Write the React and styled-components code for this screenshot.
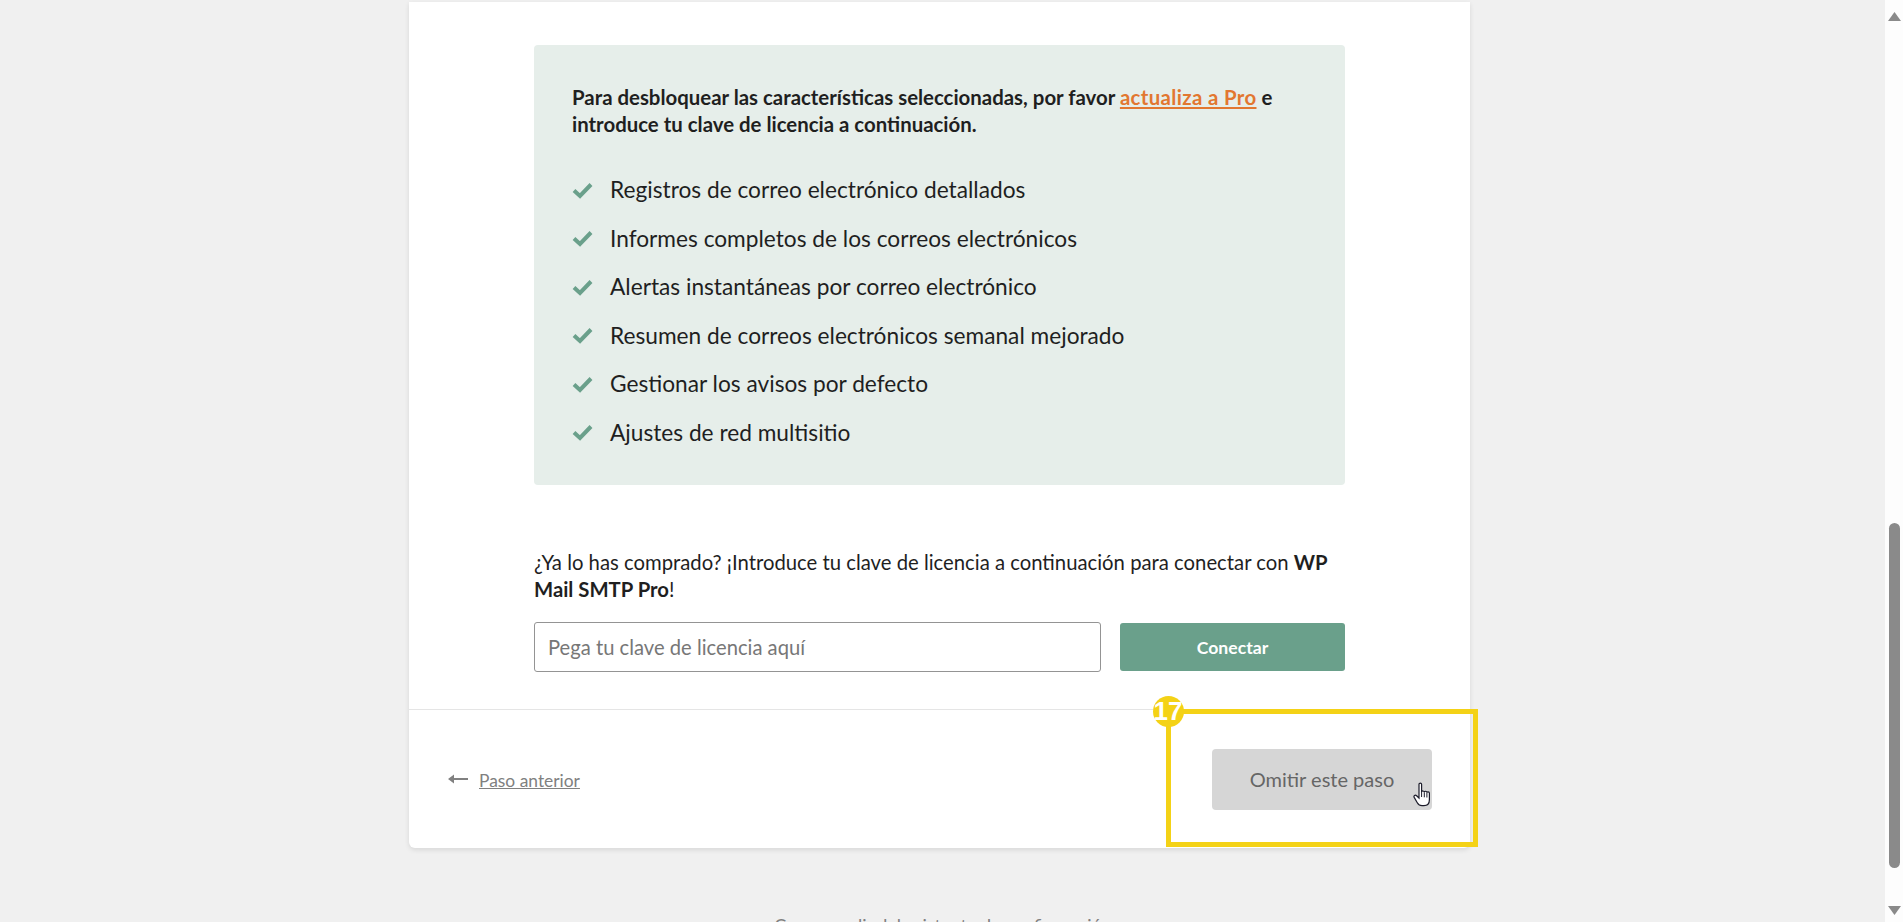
import React from 'react';
import styled, { createGlobalStyle } from 'styled-components';

const features = [
    'Registros de correo electrónico detallados',
    'Informes completos de los correos electrónicos',
    'Alertas instantáneas por correo electrónico',
    'Resumen de correos electrónicos semanal mejorado',
    'Gestionar los avisos por defecto',
    'Ajustes de red multisitio',
];

const GlobalStyle = createGlobalStyle`
    html, body {
        margin: 0;
        height: 100%;
        overflow: hidden;
        background: #f0f0f0;
    }

    * {
        box-sizing: border-box;
    }
`;

const Window = styled.div`
    display: flex;
    width: 1903px;
    height: 922px;
    overflow: hidden;
    background: #f0f0f0;
    font-family: Lato, "Open Sans", sans-serif;
    color: #1f1f1f;
`;

const Main = styled.main`
    flex: 1;
    min-width: 0;
    padding: 2px 6px 0 0;
    display: flex;
    flex-direction: column;
    align-items: center;
`;

const Card = styled.section`
    position: relative;
    width: 1061px;
    background: #fff;
    border-radius: 0 0 6px 6px;
    box-shadow: 0 2px 5px rgba(0, 0, 0, 0.1);
`;

const Body = styled.div`
    padding: 43px 125px 37px;
`;

const UpgradePanel = styled.div`
    background: #e6eeea;
    border-radius: 4px;
    padding: 39px 38px 34px;
    height: 440px;
`;

const Lead = styled.p`
    margin: 0 0 37px;
    font-size: 20.4px;
    line-height: 27px;
    font-weight: 700;
`;

const UpgradeLink = styled.a`
    color: #e27730;
    letter-spacing: 0.35px;
    text-decoration: underline;
`;

const FeatureList = styled.ul`
    list-style: none;
    margin: 0;
    padding: 0;
    display: flex;
    flex-direction: column;
    gap: 18.6px;
`;

const Feature = styled.li`
    display: flex;
    align-items: center;
    gap: 17px;
    font-size: 22.7px;
    line-height: 30px;
`;

const CheckIcon = styled.svg`
    width: 21px;
    height: 17px;
    flex: none;
    fill: none;
    stroke: #6aa08b;
    stroke-width: 4;
`;

const Purchased = styled.p`
    margin: 64px 0 19px;
    font-size: 20.3px;
    line-height: 27px;
`;

const LicenseRow = styled.div`
    display: flex;
    gap: 19px;
`;

const LicenseInput = styled.input`
    width: 567px;
    height: 50px;
    padding: 0 13px;
    border: 1px solid #949494;
    border-radius: 3px;
    background: #fff;
    font: 400 20.2px Lato, "Open Sans", sans-serif;

    &::placeholder {
        color: #777;
        opacity: 1;
    }
`;

const ConnectButton = styled.button`
    flex: 1;
    height: 48px;
    margin-top: 1px;
    border: none;
    border-radius: 3px;
    background: #6aa08b;
    color: #fff;
    font: 700 17.6px Lato, "Open Sans", sans-serif;
`;

const Footer = styled.footer`
    display: flex;
    align-items: center;
    justify-content: space-between;
    height: 139px;
    padding: 0 38px 0 39px;
    border-top: 1px solid #e5e5e5;
`;

const BackLink = styled.a`
    display: flex;
    align-items: center;
    gap: 11px;
    color: #808080;
    font-size: 17.4px;
`;

const BackLabel = styled.span`
    margin-top: 2px;
    text-decoration: underline;
`;

const BackArrow = styled.svg`
    width: 20px;
    height: 12px;
    fill: #808080;
`;

const SkipButton = styled.button`
    position: relative;
    width: 220px;
    height: 61px;
    border: none;
    border-radius: 4px;
    background: #d6d6d6;
    color: #666;
    font: 400 20px Lato, "Open Sans", sans-serif;
`;

const HandCursor = styled.svg`
    position: absolute;
    left: 201px;
    top: 33px;
    width: 18px;
    height: 25px;
`;

const Highlight = styled.div`
    position: absolute;
    left: 757px;
    top: 707px;
    width: 312px;
    height: 138px;
    border: 5px solid #f4d216;
    pointer-events: none;
`;

const StepBadge = styled.span`
    position: absolute;
    left: -18.5px;
    top: -18.5px;
    width: 31px;
    height: 31px;
    border-radius: 50%;
    background: #f4d216;
    color: #fff;
    font: 700 26px/31px "Liberation Sans", sans-serif;
    text-align: center;
`;

const ExitLink = styled.a`
    margin: 66px 0 0 7px;
    color: #808080;
    font-size: 18px;
    text-decoration: underline;
`;

const Scrollbar = styled.div`
    flex: none;
    width: 18px;
    display: flex;
    flex-direction: column;
    align-items: center;
    background: #fdfdfd;
`;

const ScrollArrow = styled.svg`
    width: 13px;
    height: 10px;
    flex: none;
    fill: #8a8a8a;
    margin-top: ${({ $top }) => $top}px;
`;

const ScrollThumb = styled.div`
    width: 11px;
    height: 345px;
    margin-top: 502px;
    border-radius: 6px;
    background: #8a8a8a;
`;

const App = () => (
    <Window>
        <GlobalStyle />
        <Main>
            <Card>
                <Body>
                    <UpgradePanel>
                        <Lead>
                            Para desbloquear las características seleccionadas, por favor{' '}
                            <UpgradeLink>actualiza a Pro</UpgradeLink> e introduce tu clave de
                            licencia a continuación.
                        </Lead>
                        <FeatureList>
                            {features.map((feature) => (
                                <Feature key={feature}>
                                    <CheckIcon viewBox="0 0 21 17">
                                        <path d="M2 8.5 L8 14 L19 2.5" />
                                    </CheckIcon>
                                    {feature}
                                </Feature>
                            ))}
                        </FeatureList>
                    </UpgradePanel>
                    <Purchased>
                        ¿Ya lo has comprado? ¡Introduce tu clave de licencia a continuación para
                        conectar con <strong>WP Mail SMTP Pro</strong>!
                    </Purchased>
                    <LicenseRow>
                        <LicenseInput placeholder="Pega tu clave de licencia aquí" />
                        <ConnectButton>Conectar</ConnectButton>
                    </LicenseRow>
                </Body>
                <Footer>
                    <BackLink>
                        <BackArrow viewBox="0 0 20 12">
                            <path d="M0 6 L6 1.5 V5 H20 V7 H6 V10.5 Z" />
                        </BackArrow>
                        <BackLabel>Paso anterior</BackLabel>
                    </BackLink>
                    <SkipButton>
                        Omitir este paso
                        <HandCursor viewBox="0 0 18 25">
                            <path
                                d="M6 2.2c0-1.5 2.6-1.5 2.6 0V10c.2-1.4 2.6-1.4 2.7.2.2-1.3 2.5-1.3 2.6.3.3-1 2.4-.9 2.5.7v6.6c0 3.600-2 5.900-5.500 5.900H9c-2.300 0-3.600-1-4.700-2.900L1.200 15.400c-.9-1.700 1-3 2.400-1.700L6 16Z"
                                fill="#fff"
                                stroke="#1c1c2a"
                                strokeWidth="1.200"
                            />
                            <path d="M8.600 10v5M11.300 10.300v5M13.900 10.500v5" stroke="#1c1c2a" strokeWidth="1" />
                        </HandCursor>
                    </SkipButton>
                </Footer>
                <Highlight>
                    <StepBadge>17</StepBadge>
                </Highlight>
            </Card>
            <ExitLink>Cerrar y salir del asistente de configuración</ExitLink>
        </Main>
        <Scrollbar>
            <ScrollArrow $top={11} viewBox="0 0 13 10">
                <path d="M6.500 1 L13 10 H0 Z" />
            </ScrollArrow>
            <ScrollThumb />
            <ScrollArrow $top={38} viewBox="0 0 13 10">
                <path d="M0 0 H13 L6.500 9 Z" />
            </ScrollArrow>
        </Scrollbar>
    </Window>
);

export default App;
